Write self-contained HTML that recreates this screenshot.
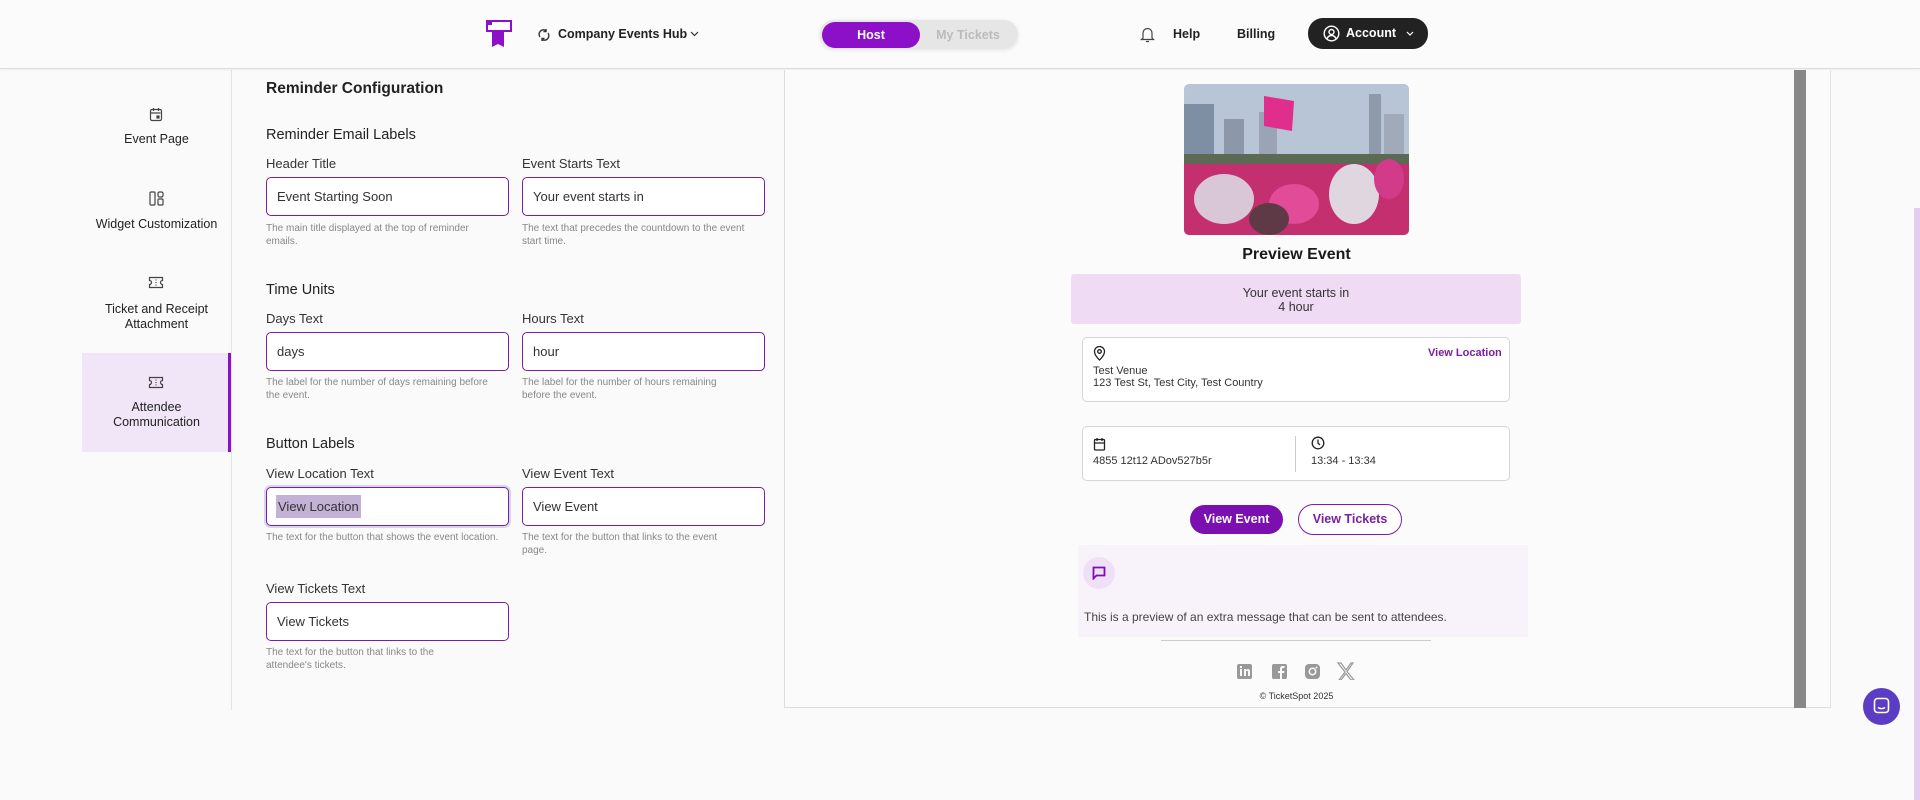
<!DOCTYPE html>
<html><head><meta charset="utf-8">
<style>
*{box-sizing:border-box;margin:0;padding:0}
body{width:1920px;height:800px;background:#fafafa;font-family:"Liberation Sans",sans-serif;color:#1a1a1a;position:relative;overflow:hidden}
.a{position:absolute}
.hdr{left:0;top:0;width:1920px;height:69px;background:#fbfbfb;border-bottom:1px solid #ddd;box-shadow:0 1px 3px rgba(0,0,0,.06)}
.nav{font-size:12.5px;font-weight:bold;color:#222}
.side{font-size:12.5px;color:#222;text-align:center;width:149px;left:82px;line-height:15px}
.h1{font-size:15.5px;font-weight:bold;color:#222}
.h2{font-size:14.5px;color:#222}
.lbl{font-size:13px;color:#333}
.inp{width:243px;height:39px;border:1.5px solid #7a1fa2;border-radius:5px;background:#fff;font-size:13px;color:#333;padding:10px 10px;line-height:17px}
.help{font-size:10px;color:#888;line-height:13px;width:235px}
.pv{font-family:"Liberation Sans",Arial,sans-serif}
.card{border:1px solid #d6d6d6;border-radius:5px;background:#fff}
</style></head><body>
<div class="a hdr"></div>
<svg class="a" style="left:486px;top:20px" width="26" height="28" viewBox="0 0 26 28"><rect x="1" y="1" width="24" height="10" fill="#fff" stroke="#8b10c8" stroke-width="2"/><path d="M6 11h12v16l-6-3-6 3z" fill="#8b10c8"/><rect x="1" y="1" width="5" height="4" fill="#8b10c8"/></svg>
<svg class="a" style="left:537px;top:28px" width="14" height="14" viewBox="0 0 14 14" fill="none" stroke="#333" stroke-width="1.4"><path d="M3 9a4.5 4.5 0 0 1 6-6.5M11 5a4.5 4.5 0 0 1-6 6.5M9 1v2.5h-2.5M5 13v-2.5h2.5"/></svg>
<div class="a nav" style="left:558px;top:27px">Company Events Hub</div>
<svg class="a" style="left:690px;top:31px" width="9" height="6" viewBox="0 0 9 6" fill="none" stroke="#333" stroke-width="1.2"><path d="M1 1l3.5 3.5L8 1"/></svg>
<div class="a" style="left:820px;top:20px;width:198px;height:29px;border-radius:15px;background:#e6e6e6;box-shadow:0 1px 4px rgba(0,0,0,.1)"></div>
<div class="a" style="left:822px;top:22px;width:98px;height:26px;border-radius:13px;background:#8b10c8;color:#fff;font-size:12.5px;font-weight:bold;text-align:center;line-height:26px">Host</div>
<div class="a" style="left:920px;top:22px;width:96px;height:26px;color:#bbb;font-size:12.5px;font-weight:bold;text-align:center;line-height:26px">My Tickets</div>
<svg class="a" style="left:1140px;top:26px" width="15" height="17" viewBox="0 0 15 17" fill="none" stroke="#444" stroke-width="1.2"><path d="M3 12V7a4.5 4.5 0 0 1 9 0v5l1.5 1.5h-12zM6 15.5h3"/></svg>
<div class="a nav" style="left:1173px;top:27px">Help</div>
<div class="a nav" style="left:1237px;top:27px">Billing</div>
<div class="a" style="left:1308px;top:18px;width:120px;height:31px;border-radius:15px;background:#222"></div>
<svg class="a" style="left:1323px;top:25px" width="17" height="17" viewBox="0 0 17 17" fill="none" stroke="#fff" stroke-width="1.4"><circle cx="8.5" cy="8.5" r="7.3"/><circle cx="8.5" cy="7" r="2.5"/><path d="M4 13.5c1-2 2.5-3 4.5-3s3.5 1 4.5 3"/></svg>
<div class="a nav" style="left:1346px;top:26px;color:#fff">Account</div>
<svg class="a" style="left:1406px;top:31px" width="8" height="5" viewBox="0 0 8 5" fill="none" stroke="#fff" stroke-width="1.2"><path d="M1 1l3 3 3-3"/></svg>

<div class="a" style="left:231px;top:70px;width:1px;height:640px;background:#e4e4e4"></div>
<div class="a" style="left:82px;top:353px;width:149px;height:99px;background:#f1e6f7;border-right:3px solid #8b10c8"></div>
<svg class="a" style="left:149px;top:107px" width="14" height="15" viewBox="0 0 14 15" fill="none" stroke="#444" stroke-width="1.2"><rect x="1.5" y="2.5" width="11" height="11" rx="1.5"/><path d="M1.5 6h10M4.5 1v3M9.5 1v3"/><rect x="8" y="9" width="2" height="2" fill="#444"/></svg>
<div class="a side" style="top:132px">Event Page</div>
<svg class="a" style="left:149px;top:191px" width="15" height="15" viewBox="0 0 15 15" fill="none" stroke="#444" stroke-width="1.2"><rect x="1" y="1" width="5" height="13" rx="1"/><rect x="9" y="1" width="5" height="5" rx="1.5"/><rect x="9" y="8" width="5" height="6" rx="1"/></svg>
<div class="a side" style="top:217px">Widget Customization</div>
<svg class="a" style="left:148px;top:276px" width="16" height="13" viewBox="0 0 16 13" fill="none" stroke="#444" stroke-width="1.2"><path d="M1.5 1.5h13v3a2 2 0 0 0 0 4v3h-13v-3a2 2 0 0 0 0-4z"/><path d="M8 3.5v1M8 6v1M8 8.5v1"/></svg>
<div class="a side" style="top:302px">Ticket and Receipt<br>Attachment</div>
<svg class="a" style="left:148px;top:376px" width="16" height="13" viewBox="0 0 16 13" fill="none" stroke="#444" stroke-width="1.2"><path d="M1.5 1.5h13v3a2 2 0 0 0 0 4v3h-13v-3a2 2 0 0 0 0-4z"/><path d="M8 3.5v1M8 6v1M8 8.5v1"/></svg>
<div class="a side" style="top:400px">Attendee<br>Communication</div>

<div class="a h1" style="left:266px;top:80px">Reminder Configuration</div>
<div class="a h2" style="left:266px;top:127px">Reminder Email Labels</div>
<div class="a lbl" style="left:266px;top:156px">Header Title</div>
<div class="a lbl" style="left:522px;top:156px">Event Starts Text</div>
<div class="a inp" style="left:266px;top:177px">Event Starting Soon</div>
<div class="a inp" style="left:522px;top:177px">Your event starts in</div>
<div class="a help" style="left:266px;top:222px">The main title displayed at the top of reminder emails.</div>
<div class="a help" style="left:522px;top:222px;width:225px">The text that precedes the countdown to the event start time.</div>

<div class="a h2" style="left:266px;top:282px">Time Units</div>
<div class="a lbl" style="left:266px;top:311px">Days Text</div>
<div class="a lbl" style="left:522px;top:311px">Hours Text</div>
<div class="a inp" style="left:266px;top:332px">days</div>
<div class="a inp" style="left:522px;top:332px">hour</div>
<div class="a help" style="left:266px;top:376px;width:225px">The label for the number of days remaining before the event.</div>
<div class="a help" style="left:522px;top:376px;width:225px">The label for the number of hours remaining before the event.</div>

<div class="a h2" style="left:266px;top:436px">Button Labels</div>
<div class="a lbl" style="left:266px;top:466px">View Location Text</div>
<div class="a lbl" style="left:522px;top:466px">View Event Text</div>
<div class="a inp" style="left:266px;top:487px;box-shadow:0 0 0 2px #d9d4ee;padding-left:9px"><span style="background:#c3b1d6;padding:4px 2px">View Location</span></div>
<div class="a inp" style="left:522px;top:487px">View Event</div>
<div class="a help" style="left:266px;top:531px">The text for the button that shows the event location.</div>
<div class="a help" style="left:522px;top:531px;width:222px">The text for the button that links to the event page.</div>
<div class="a lbl" style="left:266px;top:581px">View Tickets Text</div>
<div class="a inp" style="left:266px;top:602px">View Tickets</div>
<div class="a help" style="left:266px;top:646px;width:200px">The text for the button that links to the attendee's tickets.</div>

<div class="a" style="left:784px;top:70px;width:1047px;height:638px;border-left:1px solid #ddd;border-bottom:1px solid #ddd;border-right:1px solid #e4e4e4;background:#fbfbfb"></div>
<div class="a" style="left:1794px;top:70px;width:12px;height:638px;background:#888"></div>
<svg class="a" style="left:1184px;top:84px;border-radius:5px" width="225" height="151" viewBox="0 0 225 151">
<rect width="225" height="151" fill="#b7c5d6"/>
<rect x="0" y="20" width="30" height="60" fill="#7e8ea3"/><rect x="40" y="35" width="20" height="50" fill="#8c97a8"/><rect x="75" y="28" width="18" height="55" fill="#9aa4b4"/><rect x="185" y="10" width="12" height="70" fill="#8f9aaa"/><rect x="200" y="30" width="20" height="50" fill="#a0aab8"/>
<rect x="0" y="70" width="225" height="20" fill="#5b6a55"/>
<rect x="0" y="80" width="225" height="71" fill="#c4306f"/>
<path d="M80 12l30 5-2 30-28-5z" fill="#e02e8c"/>
<ellipse cx="40" cy="115" rx="30" ry="25" fill="#d9c6d6"/><ellipse cx="170" cy="110" rx="25" ry="30" fill="#e0d6e0"/><ellipse cx="110" cy="120" rx="25" ry="20" fill="#e14b97"/><ellipse cx="85" cy="135" rx="20" ry="16" fill="#5e3a46"/><ellipse cx="205" cy="95" rx="15" ry="20" fill="#d23b8a"/>
</svg>
<div class="a pv" style="left:1184px;top:246px;width:225px;text-align:center;font-size:16px;font-weight:bold">Preview Event</div>
<div class="a pv" style="left:1071px;top:274px;width:450px;height:50px;background:#efdcf4;border-radius:3px;text-align:center;font-size:12.5px;line-height:14px;padding-top:12px;color:#333">Your event starts in<br>4 hour</div>
<div class="a card" style="left:1082px;top:337px;width:428px;height:65px"></div>
<svg class="a" style="left:1093px;top:346px" width="13" height="15" viewBox="0 0 13 15" fill="none" stroke="#222" stroke-width="1.3"><path d="M6.5 14s5-4.5 5-8.5a5 5 0 0 0-10 0c0 4 5 8.5 5 8.5z"/><circle cx="6.5" cy="5.5" r="1.8"/></svg>
<div class="a pv" style="left:1093px;top:365px;font-size:11px;line-height:12px;color:#333">Test Venue<br>123 Test St, Test City, Test Country</div>
<div class="a pv" style="left:1428px;top:347px;font-size:11px;font-weight:bold;color:#7b1fa2">View Location</div>
<div class="a card" style="left:1082px;top:426px;width:428px;height:55px"></div>
<div class="a" style="left:1295px;top:436px;width:1px;height:36px;background:#ccc"></div>
<svg class="a" style="left:1093px;top:437px" width="13" height="14" viewBox="0 0 13 14" fill="none" stroke="#222" stroke-width="1.3"><rect x="1.5" y="2.5" width="10" height="10.5" rx="1"/><path d="M1.5 6h10M4 1v3M9 1v3"/></svg>
<div class="a pv" style="left:1093px;top:455px;font-size:11px;color:#333">4855 12t12 ADov527b5r</div>
<svg class="a" style="left:1311px;top:436px" width="14" height="14" viewBox="0 0 14 14" fill="none" stroke="#222" stroke-width="1.3"><circle cx="7" cy="7" r="5.8"/><path d="M7 3.5V7l2 2"/></svg>
<div class="a pv" style="left:1311px;top:455px;font-size:11px;color:#333">13:34 - 13:34</div>
<div class="a pv" style="left:1190px;top:505px;width:93px;height:29px;border-radius:15px;background:#7b0fb0;color:#fff;font-size:12.5px;font-weight:bold;text-align:center;line-height:29px">View Event</div>
<div class="a pv" style="left:1298px;top:504px;width:104px;height:31px;border-radius:16px;border:1.5px solid #7b1fa2;background:#fff;color:#7b1fa2;font-size:12.5px;font-weight:bold;text-align:center;line-height:28px">View Tickets</div>
<div class="a" style="left:1078px;top:545px;width:450px;height:92px;background:#f8f3fa"></div>
<div class="a" style="left:1083px;top:557px;width:32px;height:32px;border-radius:16px;background:#f0e0f7"></div>
<svg class="a" style="left:1092px;top:566px" width="14" height="14" viewBox="0 0 14 14" fill="none" stroke="#7b0fb0" stroke-width="1.8"><path d="M1.5 1.5h11v8h-8l-3 3z"/></svg>
<div class="a pv" style="left:1084px;top:610px;font-size:12px;color:#444">This is a preview of an extra message that can be sent to attendees.</div>
<div class="a" style="left:1161px;top:640px;width:270px;height:1px;background:#ccc"></div>
<svg class="a" style="left:1237px;top:662px" width="120" height="18" viewBox="0 0 120 18" fill="#999">
<rect x="0" y="2" width="15" height="15" rx="2"/><rect x="3" y="7" width="2" height="7" fill="#fafafa"/><rect x="3" y="4" width="2" height="2" fill="#fafafa"/><path d="M7 7h2v1c1-1.5 4-1.5 4 1v5h-2v-4.5c0-1-2-1-2 0v4.5h-2z" fill="#fafafa"/>
<rect x="35" y="2" width="15" height="15" rx="2"/><path d="M43 17v-6h-2v-2h2v-2c0-2 1-3 3-3h1.5v2h-1c-1 0-1.5.3-1.5 1.2v1.8h2.5l-.4 2h-2.1v6z" fill="#fafafa"/>
<rect x="68" y="2" width="15" height="15" rx="4"/><circle cx="75.5" cy="9.5" r="3.2" fill="none" stroke="#fafafa" stroke-width="1.5"/><circle cx="79.5" cy="5.5" r="1" fill="#fafafa"/>
<path d="M101 1h3l5 7 5-7h2l-6 8.5 7 8.5h-3l-5-6.5-5 6.5h-2l6-8z" fill="none" stroke="#999" stroke-width="1.2"/>
</svg>
<div class="a pv" style="left:1184px;top:691px;width:225px;text-align:center;font-size:9px;color:#333">© TicketSpot 2025</div>
<div class="a" style="left:1914px;top:208px;width:6px;height:592px;background:#e2cdee"></div>
<div class="a" style="left:1863px;top:688px;width:37px;height:37px;border-radius:19px;background:#5b3cc4"></div>
<svg class="a" style="left:1873px;top:697px" width="17" height="18" viewBox="0 0 17 18" fill="none" stroke="#fff" stroke-width="1.6"><rect x="1.5" y="1.5" width="14" height="14" rx="3"/><path d="M5 10.5c2 1.5 5 1.5 7 0"/></svg>
</body></html>
